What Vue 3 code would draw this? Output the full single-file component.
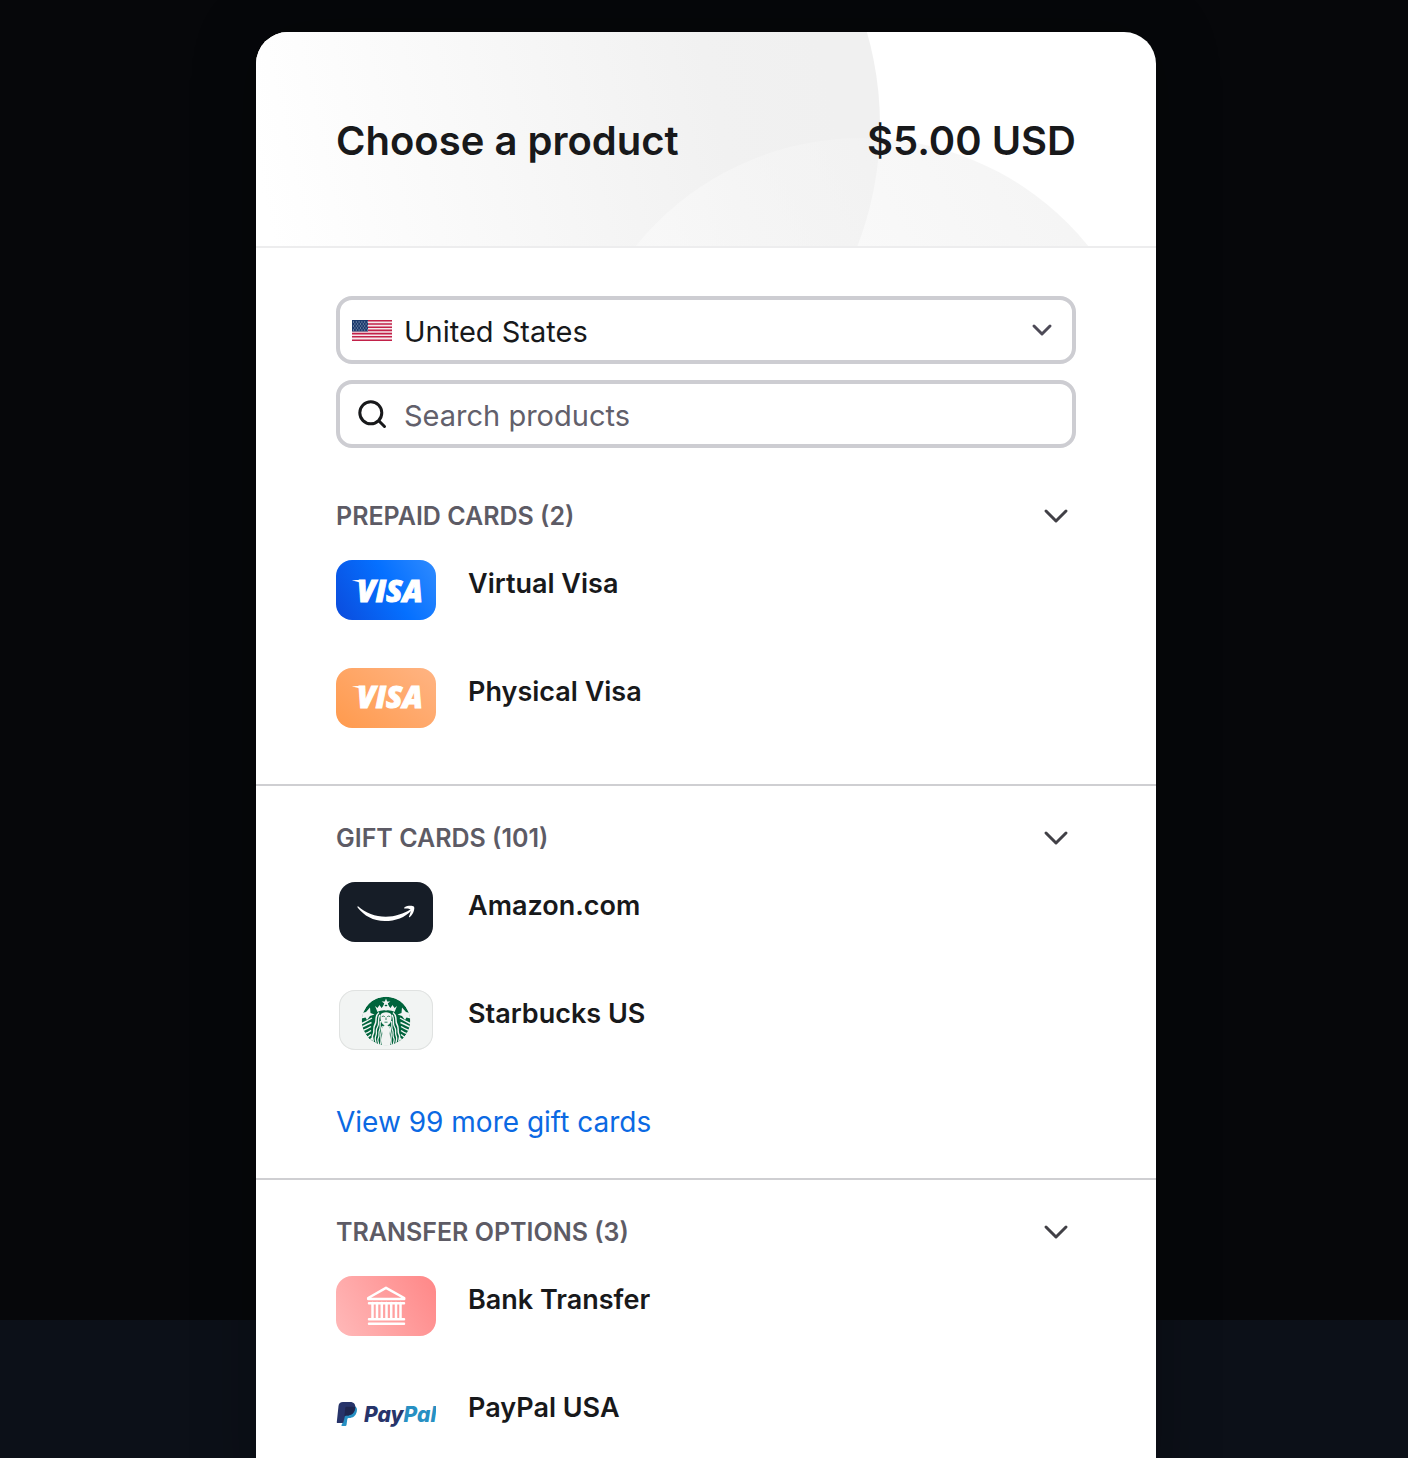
<script setup>
import { computed, ref } from 'vue'

const country = ref('United States')
const query = ref('')

const sections = ref([
  {
    id: 'prepaid',
    label: 'Prepaid cards',
    count: 2,
    open: true,
    products: [
      { icon: 'virtual', name: 'Virtual Visa' },
      { icon: 'physical', name: 'Physical Visa' }
    ]
  },
  {
    id: 'gift',
    label: 'Gift cards',
    count: 101,
    open: true,
    more: 'View 99 more gift cards',
    products: [
      { icon: 'amazon', name: 'Amazon.com' },
      { icon: 'starbucks', name: 'Starbucks US' }
    ]
  },
  {
    id: 'transfer',
    label: 'Transfer options',
    count: 3,
    open: true,
    products: [
      { icon: 'bank', name: 'Bank Transfer' },
      { icon: 'paypal', name: 'PayPal USA' }
    ]
  }
])

const visible = computed(() => {
  const q = query.value.trim().toLowerCase()
  return sections.value.map(section => ({
    ...section,
    products: section.products.filter(p => p.name.toLowerCase().includes(q))
  }))
})

const toggle = i => {
  sections.value[i].open = !sections.value[i].open
}
</script>

<template>
  <div class="page">
    <main class="card">
      <header class="header">
        <svg class="header-art" viewBox="0 0 900 214" preserveAspectRatio="xMidYMin slice" aria-hidden="true">
          <defs>
            <linearGradient id="disc-a" x1="0.08" y1="0.6" x2="0.92" y2="0.42">
              <stop offset="0" stop-color="#fff" />
              <stop offset="0.4" stop-color="#f8f8f8" />
              <stop offset="0.8" stop-color="#f1f1f1" />
              <stop offset="1" stop-color="#f0f0f0" />
            </linearGradient>
            <linearGradient id="disc-b" x1="0.3" y1="0.4" x2="0.9" y2="0.1">
              <stop offset="0" stop-color="#fafafa" />
              <stop offset="1" stop-color="#ededed" />
            </linearGradient>
          </defs>
          <circle cx="288" cy="93" r="336" fill="url(#disc-a)" />
          <circle cx="606" cy="397" r="291" fill="url(#disc-b)" fill-opacity="0.6" />
        </svg>
        <h1 class="title">Choose a product</h1>
        <p class="title">$5.00 USD</p>
      </header>

      <form class="filters" @submit.prevent>
        <label class="field">
          <svg class="flag" viewBox="0 0 40 21" aria-hidden="true">
            <rect width="40" height="21" fill="#f6e9ed" />
            <path d="M0 .8h40M0 4h40M0 7.2h40M0 10.4h40M0 13.6h40M0 16.8h40M0 20.2h40" stroke="#c22149" stroke-width="1.6" />
            <rect width="16" height="11.5" fill="#1b3a6d" />
            <path d="M1 2h15M1 6h15M1 10h15" stroke="#a9b8cf" stroke-width="1" stroke-dasharray="1 1.8" />
            <path d="M2.4 4h13M2.4 8h13" stroke="#a9b8cf" stroke-width="1" stroke-dasharray="1 1.8" />
          </svg>
          <select v-model="country" class="control" aria-label="Country">
            <option>United States</option>
          </select>
          <svg class="select-arrow" viewBox="0 0 40 40" aria-hidden="true">
            <path d="M12 16l8 8 8-8" />
          </svg>
        </label>
        <label class="field">
          <svg class="search-icon" viewBox="0 0 40 40" aria-hidden="true">
            <circle cx="18.800" cy="18.800" r="11" />
            <path d="M27 27l5.500 5.500" />
          </svg>
          <input v-model="query" class="control" type="text" placeholder="Search products" aria-label="Search products">
        </label>
      </form>

      <section v-for="(section, i) in visible" :key="section.id" class="section">
        <h2 class="section-heading">
          <button
            class="section-toggle"
            type="button"
            :aria-expanded="section.open"
            @click="toggle(i)"
          >
            <span>{{ section.label }} ({{ section.count }})</span>
            <svg class="chevron" :class="[!section.open && 'closed']" viewBox="0 0 40 32" aria-hidden="true">
              <path d="M10 11l10 10 10-10" />
            </svg>
          </button>
        </h2>

        <ul v-if="section.open" class="products">
          <li v-for="product in section.products" :key="product.name">
            <button class="product" type="button">
              <span class="thumb" :class="product.icon">
                <svg v-if="product.icon === 'virtual' || product.icon === 'physical'" viewBox="0 0 100 60" aria-hidden="true">
                  <g :class="[product.icon === 'physical' && 'raised']">
                    <path d="M16 20.600c1-.4 3-.6 6-.6h5.500l2 7c-3-3.600-7-5.400-13.500-6.400z" fill="#fff" />
                    <text class="visa" x="21" y="42">VISA</text>
                  </g>
                </svg>
                <svg v-else-if="product.icon === 'amazon'" viewBox="0 0 94 60" aria-hidden="true">
                  <path d="M19.300 24.500c7 6.500 17 10.200 27.500 10.200 9 0 18.500-3.200 24.500-7.200 1-.7 1.800.4 1 1.200-6 6.500-16 10.400-26.500 10.400-11.500 0-21-5.500-27-13.300-.7-.9-.1-1.800.5-1.300z" fill="#fff" />
                  <path d="M66 26.500c-1 .2-1.200-.8-.4-1.300 2.800-1.900 7.800-1.900 9.200-.8 1.400 1.200-.1 7.600-3.900 10.500-.6.500-1.200.2-.9-.5 1-2.300 2.200-5.600 1.700-6.600-.7-1.200-3.700-1.500-5.700-1.300z" fill="#fff" />
                </svg>
                <svg v-else-if="product.icon === 'starbucks'" viewBox="0 0 94 60" aria-hidden="true">
                  <defs>
                    <clipPath id="seal"><circle cx="24" cy="24" r="24.300" /></clipPath>
                    <g id="siren-half" fill="none" stroke="#f2f4f3">
                      <path d="M0 16l4-1 4-4.500.5 5.500 4 1.500-4.500 1.500-3 4-1.500-2.500-4 1z" fill="#f2f4f3" stroke="none" />
                      <path d="M0 26.500q5-2.500 10-5.500M0 30q5-2.500 9.500-4.500M1 33.500q4-1.500 8-4M2 37q4-1 7-3.500M4 40.500q3-1 5-3M6.500 43.500q3-1 4.500-3" stroke-width="1.400" />
                      <path d="M17 15.500c-5 4-1.500 8-4 12s0 6-2 10 1 5 0 8" stroke-width="1.500" />
                      <path d="M18 18c-3 4 0 8-2.500 12s0 5-1.700 9 1 5 0 9" stroke-width="1.300" />
                      <path d="M18.500 24c-1 4 .5 6-1 9s.5 5-1.200 8 1.500 5 0 8" stroke-width="1.200" />
                      <path d="M20.500 29c-2 3-.5 4-1.500 7s1 5-.5 12" stroke-width="1.200" />
                      <path d="M13 9l2.500 2 2-3 2 3 2.500-3 2.500 2v3.500c-3.500-.8-6.500 0-9 1.500z" fill="#f2f4f3" stroke="none" />
                    </g>
                  </defs>
                  <g transform="translate(23 7)" clip-path="url(#seal)">
                    <circle cx="24" cy="24" r="24.300" fill="#00643c" />
                    <use href="#siren-half" />
                    <use href="#siren-half" transform="matrix(-1 0 0 1 48 0)" />
                    <path d="M24 1.500l1.200 2.900h3.200l-2.600 1.900 1 3-2.800-1.800-2.800 1.800 1-3-2.600-1.900h3.200z" fill="#f2f4f3" />
                    <path d="M18.500 18c1-3.700 10-3.700 11 0 .5 5.500-1.400 10.500-5.500 10.500s-6-5-5.500-10.500z" fill="#f2f4f3" />
                    <path d="M24 27.500c-3 1-4.500 3.500-4 6.500.8 3.500-.5 6-1 9l1 6h8l1-6c-.5-3-1.800-5.500-1-9 .5-3-1-5.500-4-6.500z" fill="#f2f4f3" />
                    <path d="M19.800 19.600q1.500-1 3 0M25.200 19.600q1.500-1 3 0M24 20.500v2.500M22.500 25.200h3" fill="none" stroke="#00643c" stroke-width=".8" />
                  </g>
                </svg>
                <svg v-else-if="product.icon === 'bank'" viewBox="0 0 100 60" aria-hidden="true">
                  <path
                    d="M32.200 22L50 11.800 68.200 22v1h-36zM33 27.200h35M33 43.200h35M33 47.800h35M36.500 27v16M41 27v16M45.800 27v16M50.500 27v16M55.200 27v16M60 27v16M64.500 27v16"
                    fill="none"
                    stroke="#fff"
                    stroke-width="2.500"
                    stroke-linecap="round"
                    stroke-linejoin="round"
                  />
                </svg>
                <svg v-else viewBox="0 0 100 60" aria-hidden="true">
                  <path d="M7 38l3-16h8.500c2 .7 3 2.700 2.300 5.500-1 4.500-4 6.500-7.800 6.500-1 0-1.500.5-1.700 1.300l-.8 5.700c-.1.700-.5 1-1.200 1H6.200c-.6 0-.8-.4-.7-1z" fill="#2790c3" />
                  <path d="M7 18h7c4 0 6 2.700 5.200 6.500-1 5-4 7-8.500 7-1.200 0-1.800.5-2 1.500L7.500 38c-.1.700-.5 1-1.200 1H1.600c-.6 0-.9-.4-.8-1L2.500 22c.3-2.700 1.800-4 4.500-4z" fill="#27346a" />
                  <path d="M9.200 24.200c.2-.9.8-1.400 1.700-1.400h5.600c1.300 0 2.200.2 2.800.6-.8 5.600-4 8.100-8.600 8.100-1.200 0-1.800.3-2.300 1z" fill="#1f264f" />
                  <text class="paypal-text" x="28" y="38">Pay<tspan class="pal">Pal</tspan></text>
                </svg>
              </span>
              <span class="product-name">{{ product.name }}</span>
            </button>
          </li>
        </ul>

        <a v-if="section.open && section.more" class="more" href="#gift">{{ section.more }}</a>
      </section>
    </main>
  </div>
</template>

<style>
body {
  background: #06070a;
}
</style>

<style scoped>
.page {
  box-sizing: border-box;
  height: 100vh;
  padding: 32px 0 0 4px;
  overflow: hidden;
  background: linear-gradient(#06070a 1320px, #0c1018 1320px);
  color: #18191b;
  font-family: Inter, "Liberation Sans", sans-serif;
}

.card {
  box-sizing: border-box;
  max-width: 900px;
  min-height: 100%;
  margin: 0 auto;
  border-radius: 32px 32px 0 0;
  background: #fff;
  box-shadow: 0 0 64px rgba(0, 0, 0, .3);
  overflow: hidden;
}

.header {
  position: relative;
  box-sizing: border-box;
  display: flex;
  align-items: center;
  justify-content: space-between;
  min-height: 216px;
  padding: 4px 80px 0;
  border-bottom: 2px solid #ededee;
}

.header-art {
  position: absolute;
  inset: 0;
  width: 100%;
  height: 100%;
}

.title {
  position: relative;
  margin: 0;
  font-size: 40px;
  font-weight: 600;
  line-height: 48px;
}

.filters {
  display: flex;
  flex-direction: column;
  gap: 16px;
  padding: 48px 80px 16px;
}

.field {
  position: relative;
  display: flex;
  align-items: center;
  gap: 12px;
  height: 60px;
  padding: 0 12px;
  border: 4px solid #cdcdd2;
  border-radius: 16px;
}

.field:focus-within {
  border-color: #0b69e3;
}

.flag {
  width: 40px;
  height: 21px;
}

.search-icon,
.select-arrow {
  width: 40px;
  height: 40px;
  fill: none;
  stroke: #18191b;
  stroke-width: 3;
  stroke-linecap: round;
  stroke-linejoin: round;
}

.select-arrow {
  stroke: #4d4a57;
  margin-right: -2px;
  pointer-events: none;
}

.control {
  flex: 1;
  min-width: 0;
  height: 100%;
  padding: 2px 0 0;
  border: 0;
  outline: none;
  appearance: none;
  background: transparent;
  color: inherit;
  font-family: inherit;
  font-size: 29px;
}

.control::placeholder {
  color: #62606b;
  opacity: 1;
}

.section {
  padding: 36px 80px 56px;
}

.section + .section {
  border-top: 2px solid #cfcfd2;
}

.section:has(.more) {
  padding-bottom: 40px;
}

.section-heading {
  margin: 0 0 28px;
}

.section-toggle {
  display: flex;
  align-items: center;
  justify-content: space-between;
  width: 100%;
  padding: 0;
  border: 0;
  background: none;
  color: #5d5b65;
  font-family: inherit;
  font-size: 25px;
  font-weight: 600;
  line-height: 32px;
  text-transform: uppercase;
  cursor: pointer;
}

.chevron {
  width: 40px;
  height: 32px;
  fill: none;
  stroke: #414046;
  stroke-width: 3;
  stroke-linecap: round;
  stroke-linejoin: round;
}

.chevron.closed {
  transform: rotate(-90deg);
}

.products {
  display: flex;
  flex-direction: column;
  gap: 48px;
  margin: 0;
  padding: 0;
  list-style: none;
}

.product {
  display: flex;
  gap: 32px;
  width: 100%;
  padding: 0;
  border: 0;
  background: none;
  color: inherit;
  font-family: inherit;
  font-size: 27px;
  font-weight: 600;
  line-height: 48px;
  text-align: left;
  cursor: pointer;
}

.thumb {
  box-sizing: border-box;
  flex: none;
  width: 100px;
  height: 60px;
  border-radius: 16px;
}

.thumb svg {
  display: block;
  width: 100%;
  height: 100%;
}

.virtual {
  background: linear-gradient(60deg, #0b4bdc, #0570ff 55%, #2f8bff);
}

.physical {
  background: linear-gradient(40deg, #ff9a4d, #ffb483);
}

.amazon,
.starbucks {
  width: 94px;
  margin: 0 3px;
}

.amazon {
  background: #161d27;
}

.starbucks {
  background: #f2f4f3;
  box-shadow: inset 0 0 0 1px #e0e2e1;
}

.bank {
  background: linear-gradient(60deg, #ffb9b9, #ff8787);
}

.raised {
  transform: translateY(-2px);
}

.visa {
  fill: #fff;
  stroke: #fff;
  stroke-width: 1px;
  font-family: "Open Sans", sans-serif;
  font-size: 30px;
  font-style: italic;
  font-weight: 800;
}

.paypal-text {
  fill: #27346a;
  font-family: Inter, sans-serif;
  font-size: 21px;
  font-style: italic;
  font-weight: 800;
}

.pal {
  fill: #2790c3;
}

.more {
  display: block;
  margin-top: 56px;
  color: #0b69e3;
  font-size: 28px;
  line-height: 32px;
  text-decoration: none;
}
</style>
